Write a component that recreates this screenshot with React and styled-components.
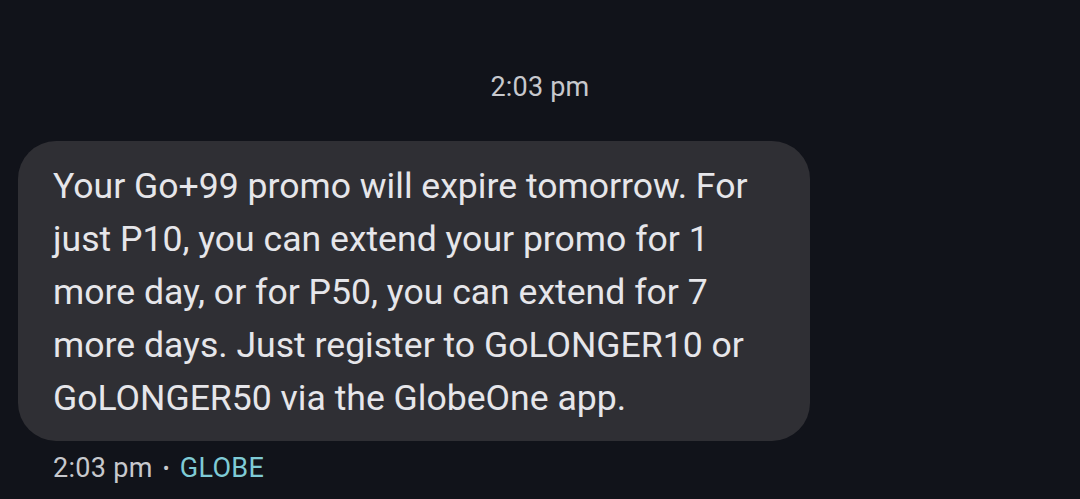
import React from 'react';
import styled, { createGlobalStyle } from 'styled-components';

const GlobalStyle = createGlobalStyle`
  html, body {
    margin: 0;
    padding: 0;
    background: #11131a;
  }
  body {
    font-family: Roboto, "Noto Sans", sans-serif;
  }
`;

const Thread = styled.main`
  width: 1080px;
  height: 499px;
  overflow: hidden;
  background: #11131a;
  display: flex;
  flex-direction: column;
`;

const Stamp = styled.div`
  margin-top: 70px;
  text-align: center;
  color: #c7c8cd;
  font-size: 27px;
  line-height: 34px;
  letter-spacing: 0.2px;
`;

const Bubble = styled.div`
  align-self: flex-start;
  margin: 37px 0 0 18px;
  width: 792px;
  box-sizing: border-box;
  padding: 19px 35px 16px;
  border-radius: 38px;
  background: #2f2f34;
  color: #e6e6ea;
  font-size: 35.6px;
  line-height: 53px;
`;

const Meta = styled.div`
  margin: 10px 0 0 53px;
  display: flex;
  align-items: center;
  gap: 10px;
  font-size: 27px;
  line-height: 34px;
  letter-spacing: 0.3px;
  color: #c7c8cd;
`;

const Dot = styled.span`
  font-size: 20px;
`;

const Sender = styled.span`
  color: #7fcbd6;
`;

export default function App() {
  return (
    <Thread>
      <GlobalStyle />
      <Stamp>2:03 pm</Stamp>
      <Bubble>
        Your Go+99 promo will expire tomorrow. For just P10, you can extend your
        promo for 1 more day, or for P50, you can extend for 7 more days. Just
        register to GoLONGER10 or GoLONGER50 via the GlobeOne app.
      </Bubble>
      <Meta>
        <span>2:03 pm</span>
        <Dot>•</Dot>
        <Sender>GLOBE</Sender>
      </Meta>
    </Thread>
  );
}
